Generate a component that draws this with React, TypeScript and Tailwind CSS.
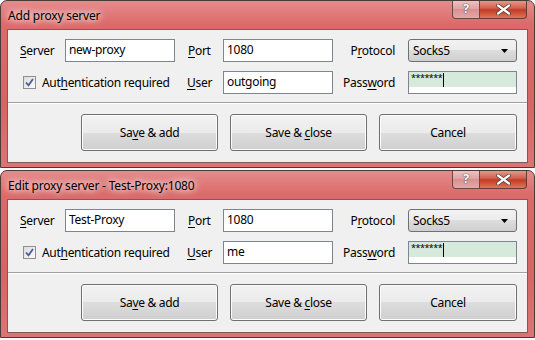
import React from "react";

const font = { fontFamily: '"Noto Sans", "Open Sans", "Liberation Sans", sans-serif' };

function U({ children }: { children: React.ReactNode }) {
  return <span className="underline underline-offset-[2px] decoration-[1px]">{children}</span>;
}

function Field({ value, className = "" }: { value: string; className?: string }) {
  return (
    <div className={`h-[23px] border border-[#7f8590] bg-white px-[3px] leading-[19px] text-[12px] text-black ${className}`}>
      {value}
    </div>
  );
}

function Password() {
  return (
    <div className="h-[23px] w-[109px] border border-[#7f8590] bg-white">
      <div className="h-[15px] bg-[#d5eadb] px-[2px] flex items-start">
        <span className="text-[9px] leading-[11px] tracking-[-0.5px]">*******</span>
        <span className="ml-[1px] mt-[1px] h-[14px] w-px bg-black" />
      </div>
    </div>
  );
}

function Select() {
  return (
    <div className="h-[23px] w-[109px] rounded-[3px] border border-[#707070] bg-[linear-gradient(#f2f2f2_0%,#ebebeb_50%,#dddddd_50%,#cfcfcf_100%)] flex items-center justify-between pl-[4px] pr-[8px] text-[12px]">
      <span>Socks5</span>
      <svg width="7" height="4" viewBox="0 0 7 4"><path d="M0 0h7L3.5 4z" fill="#000" /></svg>
    </div>
  );
}

function Check() {
  return (
    <div className="h-[13px] w-[13px] border border-[#8e8f8f] bg-[linear-gradient(135deg,#dcdcdc,#fbfbfb)] flex items-center justify-center">
      <svg width="9" height="9" viewBox="0 0 9 9">
        <path d="M1 4.5l2.5 2.8L8 1" fill="none" stroke="#4a5f97" strokeWidth="1.8" />
      </svg>
    </div>
  );
}

function Button({ children, w = "w-[137px]" }: { children: React.ReactNode; w?: string }) {
  return (
    <div className={`${w} h-[37px] rounded-[3px] border border-[#707070] shadow-[inset_0_0_0_1px_#fcfcfc] bg-[linear-gradient(#f2f2f2_0%,#ebebeb_50%,#dddddd_50%,#cfcfcf_100%)] flex items-center justify-center text-[12px] text-black whitespace-pre`}>
      {children}
    </div>
  );
}

function Dialog({ title, server, user }: { title: string; server: string; user: string }) {
  return (
    <div className="h-[168px] rounded-t-[7px] border border-[#4a3a3a] bg-[linear-gradient(180deg,#e48c8c_0%,#dc6a6a_14%,#d86464_60%,#dc7474_100%)] flex flex-col px-[6px] pb-[4px] relative overflow-hidden">
      {/* caption */}
      <div className="h-[28px] flex items-start justify-between">
        <div className="mt-[6px] ml-[1px] text-[12px] tracking-[-0.2px] text-black [text-shadow:0_0_6px_#fff,0_0_10px_#fff]">
          {title}
        </div>
        <div className="flex mr-[1px] -mt-px">
          <div className="h-[19px] w-[28px] rounded-bl-[4px] border border-[#6a4646] border-t-0 bg-[linear-gradient(#f0c6c6,#dfa0a0_50%,#d88e8e_50%,#e6a8a8)] flex items-center justify-center">
            <span className="text-[13px] font-bold text-white [text-shadow:0_0_1px_#333,0_0_1px_#333]">?</span>
          </div>
          <div className="h-[19px] w-[47px] rounded-br-[4px] border border-[#6a3a3a] border-t-0 border-l-0 bg-[linear-gradient(#e8a090,#d36050_45%,#c23a26_55%,#e27656)] flex items-center justify-center">
            <svg width="15" height="11" viewBox="0 0 15 11">
              <path d="M2 1.5l11 8M13 1.5l-11 8" stroke="#4a3030" strokeWidth="3.6" strokeLinecap="round" />
              <path d="M2 1.5l11 8M13 1.5l-11 8" stroke="#fff" strokeWidth="2.2" strokeLinecap="round" />
            </svg>
          </div>
        </div>
      </div>
      {/* client */}
      <div className="flex-1 border border-[#7a5c5c] bg-[#f0f0f0] flex flex-col text-[12px] tracking-[-0.3px] text-black">
        <div className="h-[73px] flex flex-col gap-[9px] pt-[9px] border-b border-[#a0a0a0]">
          <div className="flex items-center">
            <div className="w-[57px] pl-[12px]"><U>S</U>erver</div>
            <Field value={server} className="w-[110px]" />
            <div className="w-[48px] pl-[13px]"><U>P</U>ort</div>
            <Field value="1080" className="w-[110px]" />
            <div className="w-[75px] pr-[13px] text-right">P<U>r</U>otocol</div>
            <Select />
          </div>
          <div className="flex items-center">
            <div className="w-[179px] pl-[15px] flex items-center gap-[6px]">
              <Check />
              <span>Aut<U>h</U>entication required</span>
            </div>
            <div className="w-[36px]"><U>U</U>ser</div>
            <Field value={user} className="w-[110px]" />
            <div className="w-[75px] pr-[13px] text-right">Pass<U>w</U>ord</div>
            <Password />
          </div>
        </div>
        <div className="flex-1 flex justify-end gap-[12px] pt-[10px] pr-[10px] border-t border-white">
          <Button>Sa<U>v</U>{"e & add"}</Button>
          <Button>{"Save & "}<U>c</U>lose</Button>
          <Button w="w-[138px]">Cancel</Button>
        </div>
      </div>
    </div>
  );
}

export default function App() {
  return (
    <div className="w-[535px] h-[340px] bg-white flex flex-col gap-[2px] overflow-hidden" style={font}>
      <Dialog title="Add proxy server" server="new-proxy" user="outgoing" />
      <Dialog title="Edit proxy server - Test-Proxy:1080" server="Test-Proxy" user="me" />
    </div>
  );
}
